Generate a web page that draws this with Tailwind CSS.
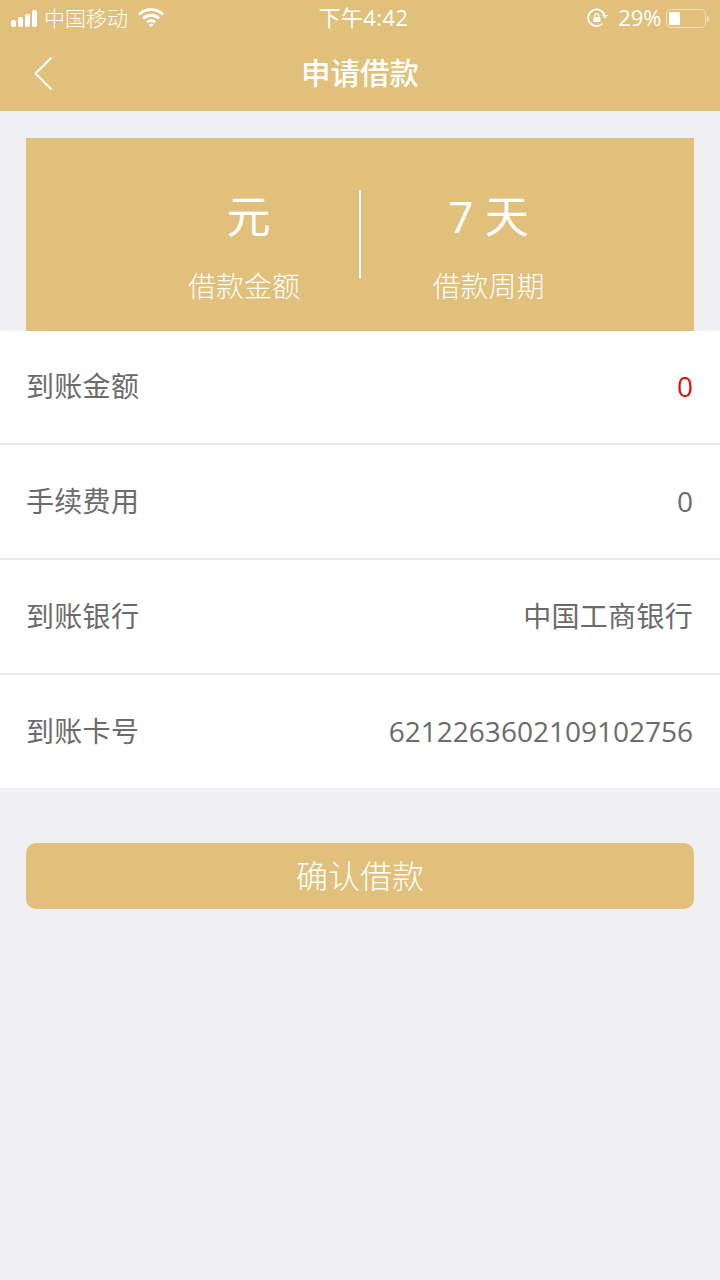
<!DOCTYPE html>
<html lang="zh-CN">
  <head>
    <meta charset="UTF-8" />
    <meta name="viewport" content="width=device-width, initial-scale=1.0" />
    <title>申请借款</title>
    <script src="https://cdn.jsdelivr.net/npm/@tailwindcss/browser@4"></script>
  </head>
  <body class="h-[1280px] w-[720px] overflow-hidden bg-[#efeff4] font-['Open_Sans','Noto_Sans_CJK_SC',sans-serif] font-normal">
    <!-- header -->
    <header class="h-[111px] bg-[#e0c07b] text-white">
      <div class="flex h-[37px] items-center justify-between pl-[11px] pr-[11px]">
        <div class="flex w-[240px] items-center">
          <div class="mb-[1px] flex items-end gap-[2px]">
            <span class="h-[7px] w-[5px] rounded-[2px] bg-white"></span>
            <span class="h-[10px] w-[5px] rounded-[2px] bg-white"></span>
            <span class="h-[13px] w-[5px] rounded-[2px] bg-white"></span>
            <span class="h-[17px] w-[5px] rounded-[2px] bg-white"></span>
          </div>
          <span class="ml-[7px] text-[21px] leading-none font-light text-white">中国移动</span>
          <svg class="ml-[10px] mb-[2px]" width="26" height="20" viewBox="0 0 26 20">
            <path d="M1 6.5a17 17 0 0 1 24 0M5 10.5a11.5 11.5 0 0 1 16 0M9 14.3a6 6 0 0 1 8 0" fill="none" stroke="#fff" stroke-width="2.8" />
            <path d="M10.6 16.5a3.6 3.6 0 0 1 4.8 0L13 19z" fill="#fff" />
          </svg>
        </div>
        <span class="ml-[7px] pb-[3px] text-[22px] leading-none tracking-[0.4px]">下午4:42</span>
        <div class="flex w-[240px] items-center justify-end">
          <svg class="mb-[1px]" width="22" height="20" viewBox="0 0 22 20">
            <path d="M15.5 15.5A8.3 8.3 0 1 1 17.6 8" fill="none" stroke="#fff" stroke-width="1.7" />
            <path d="M15 7h6l-3 3.4z" fill="#fff" />
            <rect x="6.3" y="9" width="7" height="5" rx="1" fill="#fff" />
            <path d="M7.8 9V7.6a2 2 0 0 1 4 0V9" fill="none" stroke="#fff" stroke-width="1.2" />
          </svg>
          <span class="ml-[9px] pb-[3px] text-[22px] leading-none">29%</span>
          <div class="ml-[5px] flex items-center">
            <div class="h-[19px] w-[40px] rounded-[5px] border-[1.5px] border-white/50 p-[2px]">
              <div class="h-full w-[11px] rounded-[1px] bg-white"></div>
            </div>
            <span class="ml-[1px] h-[6px] w-[1.5px] rounded-r-sm bg-white/50"></span>
          </div>
        </div>
      </div>
      <div class="relative flex h-[74px] items-center justify-center pb-[3px]">
        <svg class="absolute left-[33px] top-[19px]" width="20" height="35" viewBox="0 0 20 35">
          <path d="M18.5 1.5 2.5 17.5l16 16" fill="none" stroke="#fff" stroke-width="2" />
        </svg>
        <h1 class="text-[29.5px] leading-none font-medium">申请借款</h1>
      </div>
    </header>

    <main>
      <!-- summary -->
      <section class="mx-[26px] mt-[27px] flex h-[193px] bg-[#e0c07b] text-white">
        <div class="flex w-[333px] flex-col items-center pt-[56px] pl-[112px]">
          <p class="text-[44px] leading-[44px]">元</p>
          <p class="mt-[34px] -ml-[9px] text-[28px] leading-[28px] font-light">借款金额</p>
        </div>
        <span class="mt-[52px] h-[88px] w-[2px] bg-white"></span>
        <div class="flex flex-1 flex-col items-center pt-[56px] pr-[78px]">
          <p class="text-[44px] leading-[44px] whitespace-pre">7 天</p>
          <p class="mt-[34px] text-[28px] leading-[28px] font-light">借款周期</p>
        </div>
      </section>

      <!-- detail rows -->
      <section class="divide-y-2 divide-[#ececec] bg-white text-[28px] leading-none text-[#6b6b6b]">
        <div class="flex h-[114px] items-center justify-between pb-[2px] pl-[26px] pr-[27px]">
          <span class="tracking-[0.3px]">到账金额</span>
          <span class="text-[#e10f0f]">0</span>
        </div>
        <div class="flex h-[115px] items-center justify-between pb-[2px] pl-[26px] pr-[27px]">
          <span class="tracking-[0.3px]">手续费用</span>
          <span>0</span>
        </div>
        <div class="flex h-[115px] items-center justify-between pb-[2px] pl-[26px] pr-[27px]">
          <span class="tracking-[0.3px]">到账银行</span>
          <span class="tracking-[0.3px]">中国工商银行</span>
        </div>
        <div class="flex h-[113px] items-center justify-between pb-[2px] pl-[26px] pr-[27px]">
          <span class="tracking-[0.3px]">到账卡号</span>
          <span>6212263602109102756</span>
        </div>
      </section>

      <button class="mx-[26px] mt-[55px] flex h-[66px] w-[668px] items-center justify-center rounded-[10px] bg-[#e0c07b] text-[32px] leading-none font-light text-white">确认借款</button>
    </main>
  </body>
</html>
